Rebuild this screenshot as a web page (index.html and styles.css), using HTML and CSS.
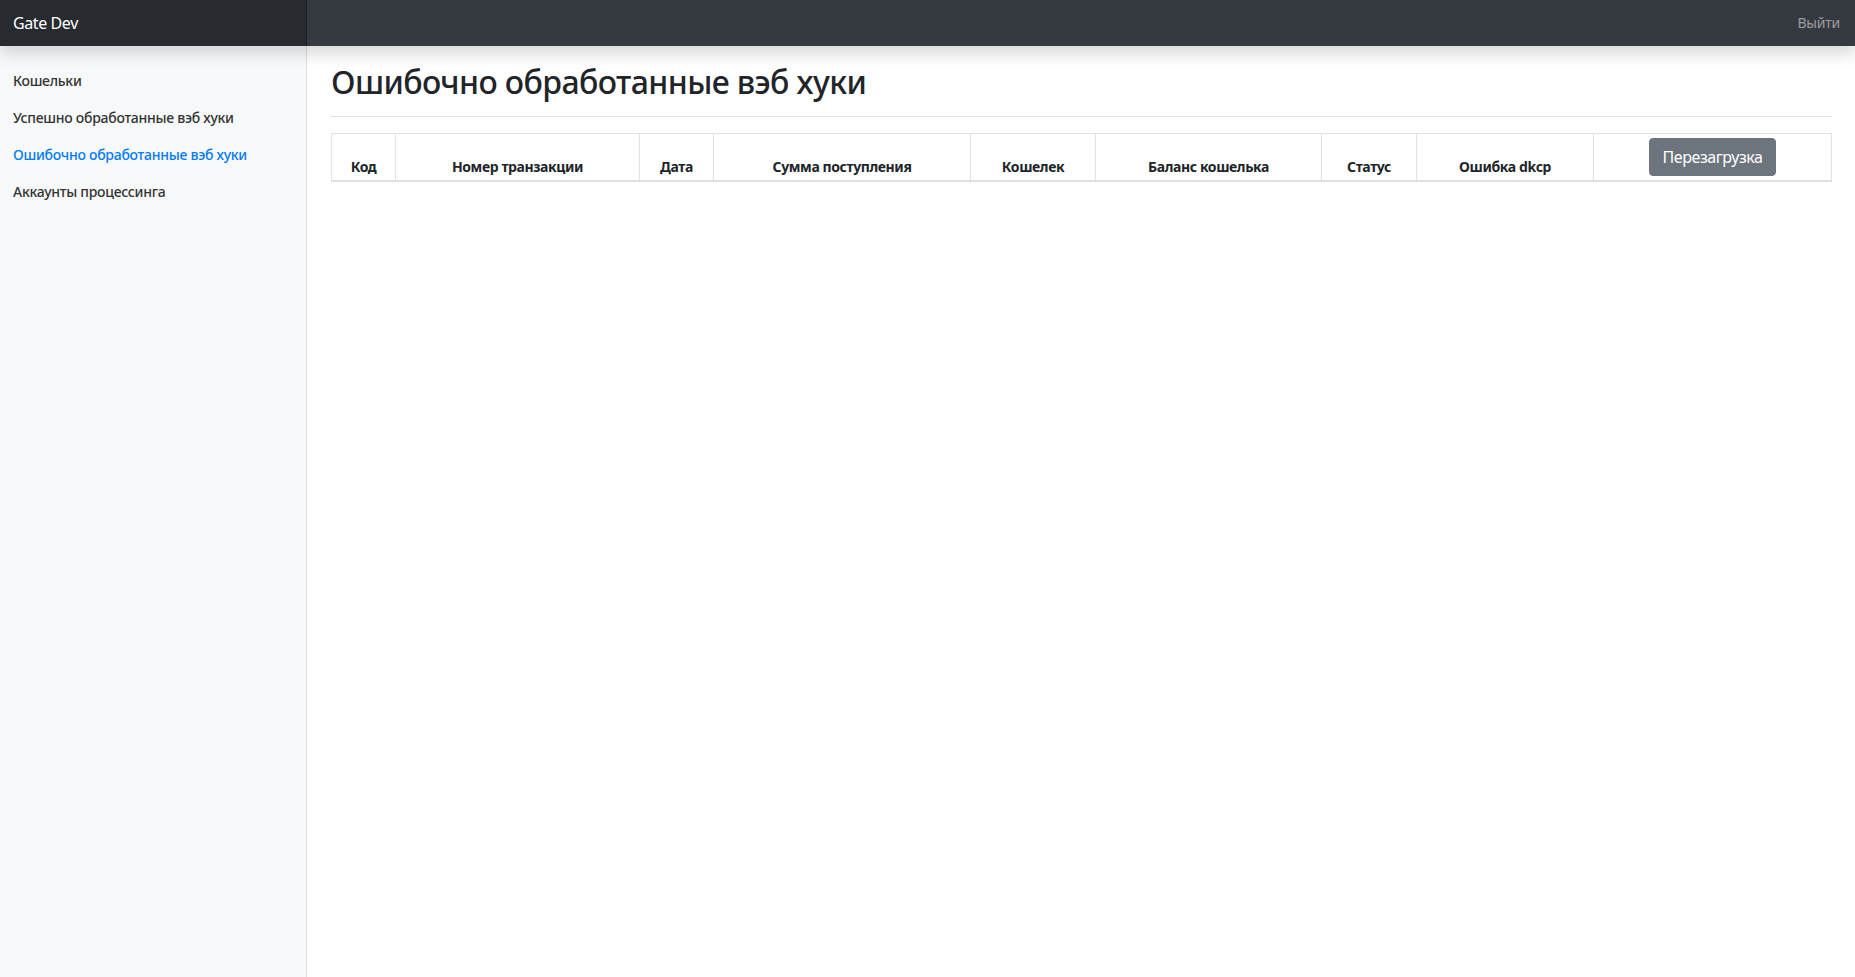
FILE: index.html
```html
<!DOCTYPE html>
<html lang="ru">
<head>
<meta charset="utf-8">
<title>Gate Dev</title>
<link rel="stylesheet" href="styles.css">
</head>
<body>
<header class="navbar">
  <a class="brand" href="#">Gate Dev</a>
  <a class="signout" href="#">Выйти</a>
</header>
<div class="layout">
  <nav class="sidebar">
    <a class="nav-link" href="#">Кошельки</a>
    <a class="nav-link" href="#">Успешно обработанные вэб хуки</a>
    <a class="nav-link active" href="#">Ошибочно обработанные вэб хуки</a>
    <a class="nav-link" href="#">Аккаунты процессинга</a>
  </nav>
  <main class="main">
    <div class="page-header">
      <h1 class="title">Ошибочно обработанные вэб хуки</h1>
    </div>
    <table class="table">
      <colgroup>
        <col class="c1"><col class="c2"><col class="c3"><col class="c4"><col class="c5"><col class="c6"><col class="c7"><col class="c8"><col class="c9">
      </colgroup>
      <thead>
        <tr>
          <th>Код</th>
          <th>Номер транзакции</th>
          <th>Дата</th>
          <th>Сумма поступления</th>
          <th>Кошелек</th>
          <th>Баланс кошелька</th>
          <th>Статус</th>
          <th>Ошибка dkcp</th>
          <th><button class="btn" type="button">Перезагрузка</button></th>
        </tr>
      </thead>
      <tbody></tbody>
    </table>
  </main>
</div>
</body>
</html>
```
FILE: styles.css
```css
html, body {
  margin: 0;
  height: 100%;
}
body {
  font-family: "Noto Sans", "Open Sans", sans-serif;
  color: #212529;
  background: #fff;
  display: grid;
  grid-template-rows: 46px 1fr;
  overflow: hidden;
}
.navbar {
  display: flex;
  align-items: stretch;
  background: #343a40;
  box-shadow: 0 8px 16px rgba(0, 0, 0, 0.15);
  position: relative;
  z-index: 2;
}
.brand {
  width: 307px;
  box-sizing: border-box;
  padding: 0 13px;
  line-height: 46px;
  font-size: 16px;
  letter-spacing: -0.4px;
  color: #fff;
  text-decoration: none;
  background: rgba(0, 0, 0, 0.25);
  box-shadow: inset -1px 0 0 rgba(0, 0, 0, 0.25);
}
.signout {
  margin-left: auto;
  padding-right: 16px;
  line-height: 46px;
  font-size: 14px;
  letter-spacing: -0.2px;
  color: rgba(255, 255, 255, 0.5);
  text-decoration: none;
}
.layout {
  display: grid;
  grid-template-columns: 307px 1fr;
  min-height: 0;
}
.sidebar {
  background: #f8f9fa;
  box-shadow: inset -1px 0 0 rgba(0, 0, 0, 0.1);
  padding-top: 16px;
  display: flex;
  flex-direction: column;
}
.nav-link {
  display: block;
  padding: 8px 13px;
  font-size: 14px;
  line-height: 21px;
  letter-spacing: -0.27px;
  font-weight: 500;
  color: #333;
  text-decoration: none;
}
.nav-link.active {
  color: #007bff;
}
.main {
  padding: 0 24px;
}
.page-header {
  padding: 17px 0 7px;
  border-bottom: 1px solid #dee2e6;
  margin-bottom: 16px;
}
.title {
  margin: 0 0 8px;
  font-size: 32px;
  font-weight: 500;
  line-height: 1.2;
  letter-spacing: -0.6px;
  color: #212529;
}
.table {
  width: 100%;
  border-collapse: collapse;
  table-layout: fixed;
}
.c1 { width: 64px; }
.c2 { width: 244px; }
.c3 { width: 74px; }
.c4 { width: 257px; }
.c5 { width: 125px; }
.c6 { width: 226px; }
.c7 { width: 95px; }
.c8 { width: 177px; }
.c9 { width: 238px; }
.table th {
  border: 1px solid #dee2e6;
  border-bottom-width: 2px;
  padding: 4px;
  vertical-align: bottom;
  text-align: center;
  font-weight: 700;
  font-size: 14px;
  line-height: 18px;
  letter-spacing: -0.4px;
  color: #212529;
}
.btn {
  font-family: inherit;
  background: #6c757d;
  border: 1px solid #6c757d;
  color: #fff;
  padding: 6px 12px;
  font-size: 16px;
  line-height: 24px;
  letter-spacing: -0.42px;
  border-radius: 4px;
  cursor: pointer;
}
```
